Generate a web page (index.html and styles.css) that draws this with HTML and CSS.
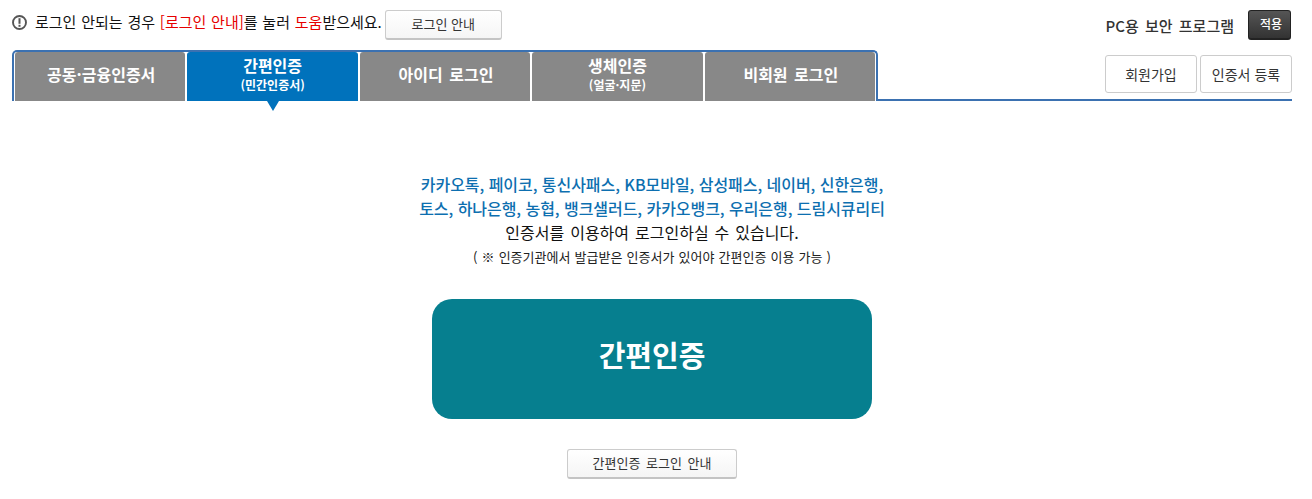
FILE: index.html
```html
<!DOCTYPE html>
<html lang="ko">
<head>
    <meta charset="UTF-8">
    <title>로그인</title>
    <link rel="stylesheet" href="styles.css">
</head>
<body>

    <div class="wrap">
        <div class="top">
            <div class="help">
                <svg class="help-icon" width="15" height="15" viewBox="0 0 15 15">
                    <circle cx="7.5" cy="7.5" r="6.5" fill="none" stroke="#555" stroke-width="1.9"/>
                    <rect x="6.5" y="3.2" width="2" height="5.6" fill="#555"/>
                    <rect x="6.5" y="9.8" width="2" height="2" fill="#555"/>
                </svg>
                <span class="help-text">로그인 안되는 경우 <em>[로그인 안내]</em>를 눌러 <em>도움</em>받으세요.</span>
                <button type="button" class="btn btn-help">로그인 안내</button>
            </div>
            <div class="security">
                <span class="security-text">PC용 보안 프로그램</span>
                <button type="button" class="btn-dark">적용</button>
            </div>
        </div>

        <div class="tab-row">
            <ul class="tabs">
                <li class="tab tab-one">공동·금융인증서</li>
                <li class="tab active">간편인증<small>(민간인증서)</small></li>
                <li class="tab tab-one">아이디 로그인</li>
                <li class="tab">생체인증<small>(얼굴·지문)</small></li>
                <li class="tab tab-one">비회원 로그인</li>
            </ul>
            <div class="tab-links">
                <button type="button" class="btn-line">회원가입</button>
                <button type="button" class="btn-line">인증서 등록</button>
            </div>
        </div>

        <div class="content">
            <p class="orgs">카카오톡, 페이코, 통신사패스, KB모바일, 삼성패스, 네이버, 신한은행,<br>토스, 하나은행, 농협, 뱅크샐러드, 카카오뱅크, 우리은행, 드림시큐리티</p>
            <p class="desc">인증서를 이용하여 로그인하실 수 있습니다.</p>
            <p class="note">( ※ 인증기관에서 발급받은 인증서가 있어야 간편인증 이용 가능 )</p>
            <button type="button" class="btn-main">간편인증</button>
            <button type="button" class="btn btn-guide">간편인증 로그인 안내</button>
        </div>
    </div>

</body>
</html>
```

FILE: styles.css
```css
* { box-sizing: border-box; }
body { margin: 0; background: #fff; color: #111; font-family: "Noto Sans CJK KR", "Noto Sans", sans-serif; }
button { font-family: inherit; cursor: pointer; }
.wrap { margin: 0 20px 0 12px; }

.top { display: flex; justify-content: space-between; align-items: flex-start; height: 50px; padding-top: 10px; }
.help { display: flex; align-items: flex-start; }
.help-icon { margin: 5px 8px 0 0; }
.help-text { font-size: 15px; line-height: 24px; color: #111; margin-right: 3px; word-spacing: 0.6px; }
.help-text em { font-style: normal; color: #e60000; }
.btn { padding: 0 0 3px; background: linear-gradient(#fff, #f5f5f5); border: 1px solid #ccc; border-bottom: 2px solid #c4c4c4; border-radius: 3px; color: #333; font-size: 13px; }
.btn-help { width: 117px; height: 30px; }
.security { display: flex; align-items: center; margin-right: 1px; }
.security-text { font-size: 15px; font-weight: 500; color: #333; margin-right: 14px; word-spacing: 2px; }
.btn-dark { width: 43px; height: 30px; padding: 0 0 3px 3px; background: linear-gradient(#555, #333); border: 1px solid #222; border-bottom: 2px solid #222; border-radius: 3px; color: #fff; font-size: 12px; font-weight: 500; }

.tab-row { display: flex; justify-content: space-between; height: 51px; border-bottom: 2px solid #3b71b1; }
.tabs { display: flex; gap: 2px; list-style: none; margin: 0; padding: 0 1px; width: 866px; height: 51px; background: #fff; border: 2px solid #3b71b1; border-bottom: 0; border-radius: 5px 5px 0 0; }
.tab { position: relative; display: flex; flex-direction: column; justify-content: center; align-items: center; flex: 1 1 170px; height: 49px; padding-bottom: 3px; background: #888; border-radius: 3px 3px 0 0; color: #fff; font-size: 16px; font-weight: 700; line-height: 20px; word-spacing: 2px; }
.tab-one { padding: 0 0 6px 2px; }
.tab small { font-size: 12px; line-height: 20px; }
.tab.active { background: #0072bc; }
.tab.active::after { content: ""; position: absolute; left: 80px; top: 49px; border-top: 10px solid #0072bc; border-left: 6.5px solid transparent; border-right: 6.5px solid transparent; }
.tab-links { display: flex; gap: 3px; padding-top: 5px; }
.btn-line { width: 92px; height: 38px; padding: 0 0 1px; background: #fff; border: 1px solid #ccc; border-radius: 3px; color: #333; font-size: 14px; }

.content { display: flex; flex-direction: column; align-items: center; padding-top: 71px; }
.content p { margin: 0; text-align: center; }
.orgs { font-size: 16px; line-height: 24px; font-weight: 500; color: #0d6fb0; letter-spacing: -0.05px; }
.desc { font-size: 16px; line-height: 24px; color: #111; word-spacing: 1.5px; }
.content .note { margin-top: 1px; font-size: 13px; line-height: 24px; color: #222; word-spacing: 0.5px; }
.btn-main { width: 440px; height: 120px; margin-top: 30px; padding: 0 0 10px; background: #067f8f; border: 0; border-radius: 20px; color: #fff; font-size: 29px; font-weight: 700; }
.btn-guide { width: 170px; height: 30px; margin-top: 30px; word-spacing: 2px; }
```
